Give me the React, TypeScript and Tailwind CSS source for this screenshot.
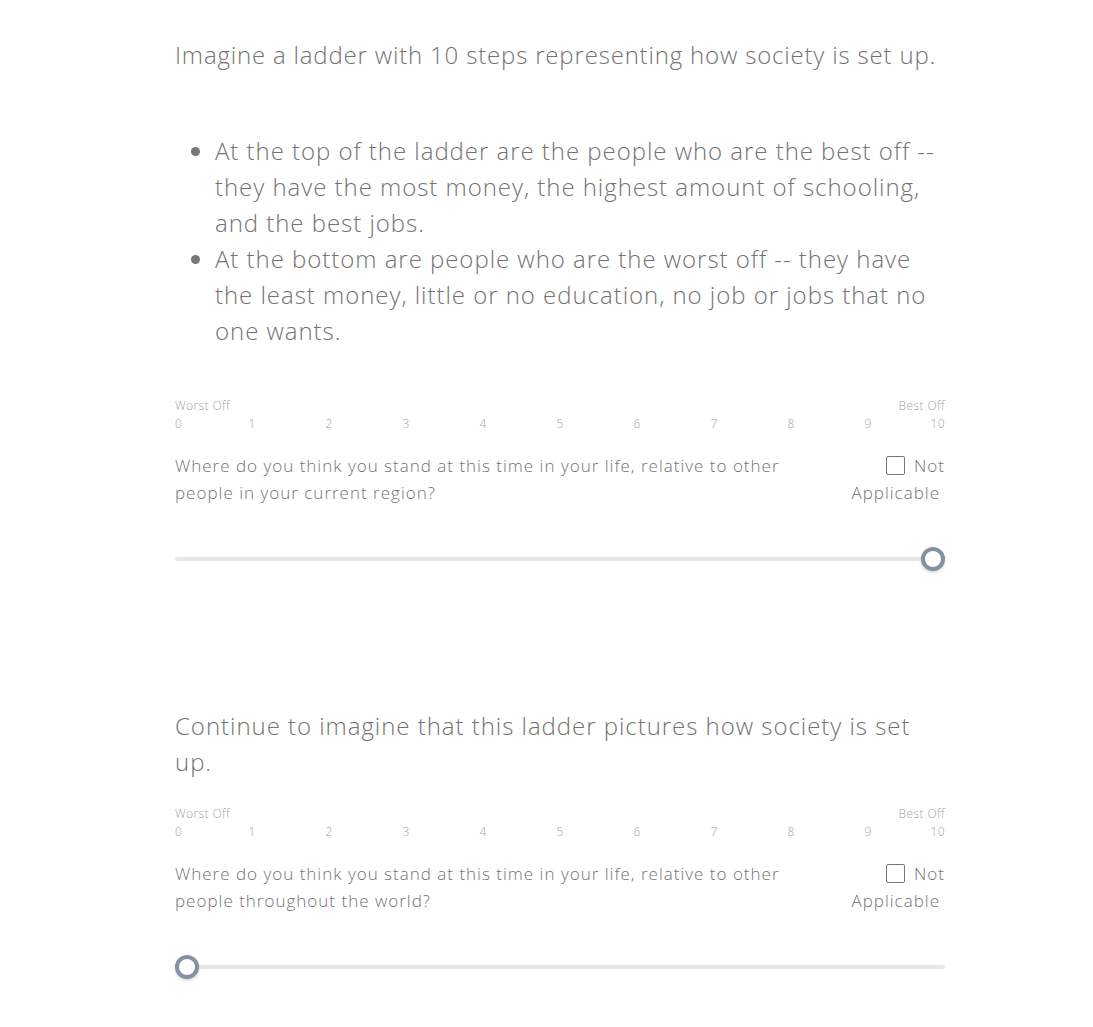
const steps = ['1', '2', '3', '4', '5', '6', '7', '8', '9'];

const Scale = () => (
  <div className="text-[12px] leading-[18px] tracking-[0.4px] text-[#a3a3a3]">
    <div className="flex justify-between">
      <span>Worst Off</span>
      <span>Best Off</span>
    </div>
    <div className="flex">
      <span className="w-[38.5px] text-left">0</span>
      {steps.map((s) => (
        <span key={s} className="w-[77px] text-center">
          {s}
        </span>
      ))}
      <span className="w-[38.5px] text-right">10</span>
    </div>
  </div>
);

const Slider = ({ value }: { value: number }) => (
  <div className="relative h-6">
    <div className="absolute left-0 right-0 top-[10px] h-[4px] rounded-full bg-[#e6e6e6]" />
    <div
      className="absolute top-0 h-6 w-6 rounded-full border-[4px] border-[#8391a5] bg-white shadow-[0_2px_3px_rgba(0,0,0,0.15)]"
      style={{ left: `calc((100% - 24px) * ${value / 10})` }}
    />
  </div>
);

const Question = ({ text, value }: { text: string; value: number }) => (
  <div>
    <Scale />
    <div className="mt-[19px] flex justify-between text-[17px] leading-[27px] tracking-[1px] text-[#737373]">
      <p className="w-[640px]">{text}</p>
      <label className="flex w-[110px] flex-wrap justify-end text-right">
        <span className="flex items-center gap-[9px]">
          <span className="inline-block h-[19px] w-[19px] rounded-[2px] border-[1.5px] border-[#777]" />
          <span>Not</span>
        </span>
        <span className="pr-[5px]">Applicable</span>
      </label>
    </div>
    <div className="mt-[41px]">
      <Slider value={value} />
    </div>
  </div>
);

export default function App() {
  return (
    <div
      className="min-h-[1027px] bg-white"
      style={{ fontFamily: '"Open Sans", sans-serif' }}
    >
      <div className="ml-[175px] w-[770px] pt-[37px] font-light">
        <p className="text-[24px] leading-[36px] tracking-[0.82px] text-[#737373]">
          Imagine a ladder with 10 steps representing how society is set up.
        </p>
        <ul className="mt-[60px] list-disc pl-[40px] text-[24px] leading-[36px] tracking-[0.96px] text-[#737373] marker:text-[#777]">
          <li>
            At the top of the ladder are the people who are the best off --
            they have the most money, the highest amount of schooling, and the
            best jobs.
          </li>
          <li>
            At the bottom are people who are the worst off -- they have the
            least money, little or no education, no job or jobs that no one
            wants.
          </li>
        </ul>
        <div className="mt-[48px]">
          <Question
            text="Where do you think you stand at this time in your life, relative to other people in your current region?"
            value={10}
          />
        </div>
        <p className="mt-[137px] text-[24px] leading-[36px] tracking-[0.96px] text-[#737373]">
          Continue to imagine that this ladder pictures how society is set up.
        </p>
        <div className="mt-[25px] pb-[48px]">
          <Question
            text="Where do you think you stand at this time in your life, relative to other people throughout the world?"
            value={0}
          />
        </div>
      </div>
    </div>
  );
}
